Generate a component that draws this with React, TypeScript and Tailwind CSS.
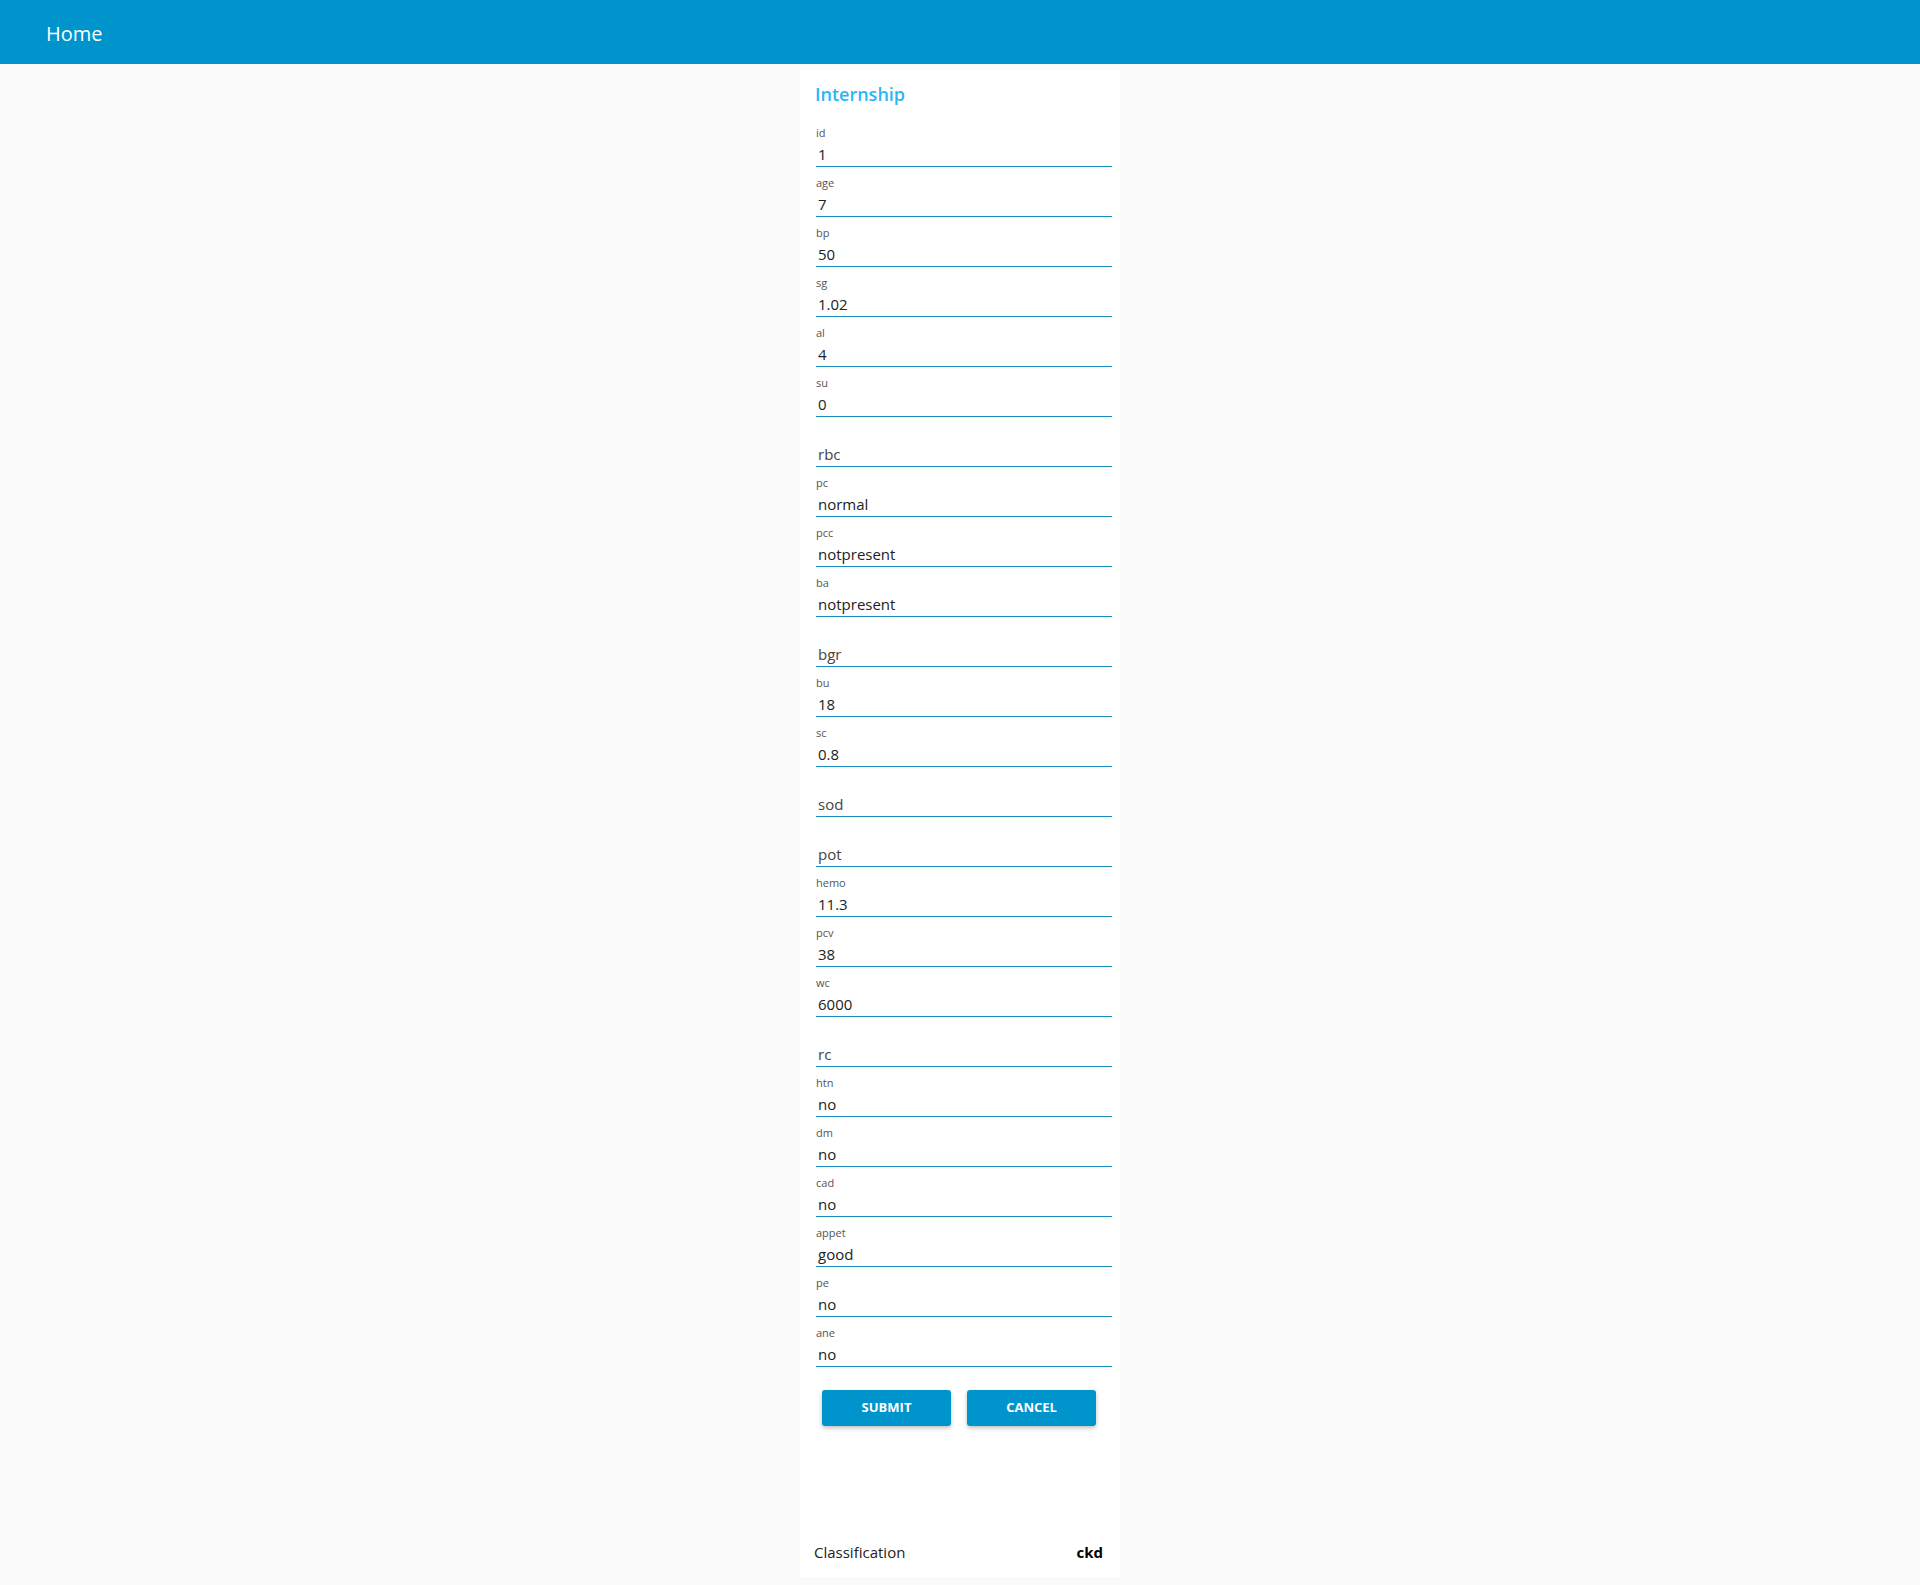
import React from "react";

type Field = { name: string; value: string };

const fields: Field[] = [
  { name: "id", value: "1" },
  { name: "age", value: "7" },
  { name: "bp", value: "50" },
  { name: "sg", value: "1.02" },
  { name: "al", value: "4" },
  { name: "su", value: "0" },
  { name: "rbc", value: "" },
  { name: "pc", value: "normal" },
  { name: "pcc", value: "notpresent" },
  { name: "ba", value: "notpresent" },
  { name: "bgr", value: "" },
  { name: "bu", value: "18" },
  { name: "sc", value: "0.8" },
  { name: "sod", value: "" },
  { name: "pot", value: "" },
  { name: "hemo", value: "11.3" },
  { name: "pcv", value: "38" },
  { name: "wc", value: "6000" },
  { name: "rc", value: "" },
  { name: "htn", value: "no" },
  { name: "dm", value: "no" },
  { name: "cad", value: "no" },
  { name: "appet", value: "good" },
  { name: "pe", value: "no" },
  { name: "ane", value: "no" },
];

function FormField({ name, value }: Field) {
  return (
    <div className="mb-[6px] h-[44px] w-[296px]">
      <div className="h-[18px] pt-[2px] text-[11px] leading-[16px] text-[#555]">{value ? name : ""}</div>
      <input
        readOnly
        value={value}
        placeholder={name}
        className="block h-[26px] w-full border-b border-[#1a8dc0] bg-transparent px-[2px] text-[15px] text-[#222] outline-none placeholder:text-[#444]"
      />
    </div>
  );
}

export default function App() {
  return (
    <div className="min-h-[1585px] bg-[#fafafa] font-['Open_Sans',sans-serif]">
      <header className="flex h-16 items-center bg-[#0094cc] px-[46px] pt-[4px]">
        <span className="text-[20px] text-white">Home</span>
      </header>

      <main className="mx-auto mt-[6px] w-[320px] bg-white pb-[13px]">
        <h1 className="px-[15px] pt-[12px] text-[18px] leading-[24px] font-semibold text-[#29b6f6]">
          Internship
        </h1>

        <form className="mt-[17px] px-[16px]">
          {fields.map((f) => (
            <FormField key={f.name} {...f} />
          ))}

          <div className="mt-[23px] flex gap-4 pl-[6px]">
            <button
              type="button"
              className="h-9 w-[129px] rounded-[3px] bg-[#0094cc] text-[13px] font-bold text-white shadow-[0_2px_4px_rgba(0,0,0,0.25)]"
            >
              SUBMIT
            </button>
            <button
              type="button"
              className="h-9 w-[129px] rounded-[3px] bg-[#0094cc] text-[13px] font-bold text-white shadow-[0_2px_4px_rgba(0,0,0,0.25)]"
            >
              CANCEL
            </button>
          </div>
        </form>

        <div className="mt-[115px] flex items-center justify-between pl-[14px] pr-[17px] text-[15px] text-[#222]">
          <span>Classification</span>
          <span className="font-bold text-black">ckd</span>
        </div>
      </main>
    </div>
  );
}
